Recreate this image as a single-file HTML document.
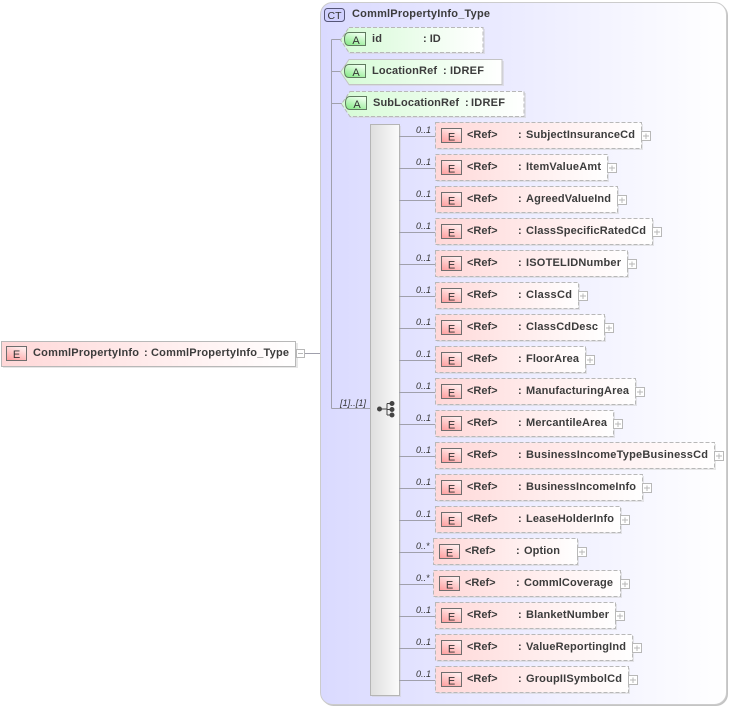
<!DOCTYPE html>
<html><head><meta charset="utf-8"><style>
html,body{margin:0;padding:0;background:#fff;width:731px;height:708px;overflow:hidden}
svg{display:block}
text{font-family:"Liberation Sans",sans-serif;font-size:11px;font-weight:bold;fill:#3c3c3c}
.c{font-size:9px;font-weight:normal;font-style:italic;fill:#333}
.e{font-weight:normal;fill:#333;text-anchor:middle;font-size:11px}
.l{stroke:#a0a0ac;stroke-width:1;fill:none}
.b{fill:url(#rg);stroke:#b8b8b8;stroke-width:1;stroke-dasharray:4 2}
.bs{fill:url(#rg);stroke:#c4c4c4;stroke-width:1}
.s{fill:#cfcfcf;opacity:.5}
.i{fill:url(#eg);stroke:#6e6e6e;stroke-width:1}
.p{fill:#fff;stroke:#b8b8b8;stroke-width:1}
.pl{stroke:#b8b8b8;stroke-width:1;fill:none}
.a{fill:url(#ag);stroke:#b8b8b8;stroke-width:1;stroke-dasharray:4 2}
.as{fill:url(#ag);stroke:#c4c4c4;stroke-width:1}
.ai{fill:url(#aig);stroke:#5f7a5f;stroke-width:1}
</style></head><body>
<svg width="731" height="708" viewBox="0 0 731 708" xmlns="http://www.w3.org/2000/svg">
<defs>
<linearGradient id="rg" x1="0" x2="1" y1="0" y2="0"><stop offset="0" stop-color="#ffd8d8"/><stop offset="1" stop-color="#ffffff"/></linearGradient>
<linearGradient id="ag" x1="0" x2="1" y1="0" y2="0"><stop offset="0" stop-color="#d6fbd6"/><stop offset="1" stop-color="#ffffff"/></linearGradient>
<linearGradient id="eg" x1="0" x2="0.5" y1="1" y2="0"><stop offset="0" stop-color="#ff9c9c"/><stop offset="1" stop-color="#ffeaea"/></linearGradient>
<linearGradient id="aig" x1="0" x2="0.5" y1="1" y2="0"><stop offset="0" stop-color="#7fe87f"/><stop offset="1" stop-color="#eaffea"/></linearGradient>
<linearGradient id="cg" x1="0" x2="1" y1="0" y2="0"><stop offset="0" stop-color="#dadaff"/><stop offset="1" stop-color="#ffffff"/></linearGradient>
<linearGradient id="sg" x1="0" x2="1" y1="0" y2="0"><stop offset="0" stop-color="#dedede"/><stop offset="1" stop-color="#fbfbfb"/></linearGradient>
</defs>

<!-- root element -->
<rect class="s" x="3" y="343" width="295" height="25"/>
<rect x="1.5" y="341.5" width="294" height="25" fill="url(#rg)" stroke="#b8b8b8"/>
<rect class="i" x="6.5" y="346.5" width="20" height="14"/>
<text class="e" x="16.5" y="358">E</text>
<text x="33" y="356" textLength="106" lengthAdjust="spacing">CommlPropertyInfo</text>
<text x="144" y="356">:</text>
<text x="151" y="356" textLength="138" lengthAdjust="spacing">CommlPropertyInfo_Type</text>
<rect class="p" x="296.5" y="349.5" width="8" height="8"/>
<path class="pl" d="M298 353.5H303"/>
<path class="l" d="M305 353.5H331"/>

<!-- complex type container -->
<rect x="321.500" y="3.500" width="406.500" height="702.500" rx="12" fill="#c4c4c4"/>
<rect x="320.500" y="2.500" width="406" height="702" rx="12" fill="url(#cg)" stroke="#cccccc"/>
<rect x="324.500" y="8.500" width="20" height="13" rx="3" fill="#d0d0ff" stroke="#555577"/>
<text class="e" x="334.500" y="19" style="font-size:10.5px">CT</text>
<text x="352" y="17" textLength="138" lengthAdjust="spacing">CommlPropertyInfo_Type</text>

<!-- tree lines -->
<path class="l" d="M331.500 39.500V408.500M331.500 39.500H341M331.500 71.500H341M331.500 103.500H342M331.500 408.500H370"/>
<text class="c" x="340" y="406" textLength="26">[1]..[1]</text>

<!-- attributes -->
<path class="s" d="M349 29H485V54H349L343 41Z"/>
<path class="a" d="M349 27.500H483V52.500H349L340.500 40Z"/>
<path class="ai" d="M349 32.500H365.500V45.500H349Q344.500 45.500 344.500 39Q344.500 32.500 349 32.500Z"/>
<text class="e" x="356" y="44">A</text>
<text x="372" y="42" textLength="10" lengthAdjust="spacing">id</text>
<text x="423" y="42">: ID</text>

<path class="s" d="M349 61H504V86H349L343 73Z"/>
<path class="as" d="M349 59.500H502V84.500H349L340.500 72Z"/>
<path class="ai" d="M349 64.500H365.500V77.500H349Q344.500 77.500 344.500 71Q344.500 64.500 349 64.500Z"/>
<text class="e" x="356" y="76">A</text>
<text x="372" y="74" textLength="65" lengthAdjust="spacing">LocationRef</text>
<text x="443" y="74">:</text>
<text x="450" y="74" textLength="34" lengthAdjust="spacing">IDREF</text>

<path class="s" d="M350 93H526V118H350L344 105Z"/>
<path class="a" d="M350 91.500H524V116.500H350L341.500 104Z"/>
<path class="ai" d="M350 96.500H366.500V109.500H350Q345.500 109.500 345.500 103Q345.500 96.500 350 96.500Z"/>
<text class="e" x="357" y="108">A</text>
<text x="373" y="106" textLength="86" lengthAdjust="spacing">SubLocationRef</text>
<text x="465" y="106">:</text>
<text x="471" y="106" textLength="34" lengthAdjust="spacing">IDREF</text>

<!-- sequence -->
<rect class="s" x="372" y="126" width="29" height="571"/>
<rect x="370.500" y="124.500" width="29" height="571" fill="url(#sg)" stroke="#b5b5b5"/>
<g fill="#444" stroke="#444">
<path fill="none" d="M379 409H387M387 403.500V415M387 403.500H392M387 409.500H392M387 415H392"/>
<circle cx="379.500" cy="409" r="2"/>
<circle cx="392" cy="403.500" r="2"/>
<circle cx="392" cy="409.500" r="2"/>
<circle cx="392" cy="415" r="2"/>
</g>

<!-- rows -->
<g transform="translate(0,122)"><path class="l" d="M399 14.500H435"/><text class="c" x="416" y="11">0..1</text><rect class="s" x="437" y="2" width="206" height="26"/><rect class="b" x="435.500" y="0.500" width="206" height="26"/><rect class="i" x="441.500" y="6.500" width="20" height="14"/><text class="e" x="451.500" y="18.500">E</text><text x="467" y="16">&lt;Ref&gt;</text><text x="518" y="16">:</text><text x="526" y="16" textLength="109" lengthAdjust="spacing">SubjectInsuranceCd</text><rect class="p" x="641.500" y="9.500" width="9" height="9"/><path class="pl" d="M643 14H649M646 11.500V17"/></g>
<g transform="translate(0,154)"><path class="l" d="M399 14.500H435"/><text class="c" x="416" y="11">0..1</text><rect class="s" x="437" y="2" width="172" height="26"/><rect class="b" x="435.500" y="0.500" width="172" height="26"/><rect class="i" x="441.500" y="6.500" width="20" height="14"/><text class="e" x="451.500" y="18.500">E</text><text x="467" y="16">&lt;Ref&gt;</text><text x="518" y="16">:</text><text x="526" y="16" textLength="75" lengthAdjust="spacing">ItemValueAmt</text><rect class="p" x="607.500" y="9.500" width="9" height="9"/><path class="pl" d="M609 14H615M612 11.500V17"/></g>
<g transform="translate(0,186)"><path class="l" d="M399 14.500H435"/><text class="c" x="416" y="11">0..1</text><rect class="s" x="437" y="2" width="182" height="26"/><rect class="b" x="435.500" y="0.500" width="182" height="26"/><rect class="i" x="441.500" y="6.500" width="20" height="14"/><text class="e" x="451.500" y="18.500">E</text><text x="467" y="16">&lt;Ref&gt;</text><text x="518" y="16">:</text><text x="526" y="16" textLength="85" lengthAdjust="spacing">AgreedValueInd</text><rect class="p" x="617.500" y="9.500" width="9" height="9"/><path class="pl" d="M619 14H625M622 11.500V17"/></g>
<g transform="translate(0,218)"><path class="l" d="M399 14.500H435"/><text class="c" x="416" y="11">0..1</text><rect class="s" x="437" y="2" width="217" height="26"/><rect class="b" x="435.500" y="0.500" width="217" height="26"/><rect class="i" x="441.500" y="6.500" width="20" height="14"/><text class="e" x="451.500" y="18.500">E</text><text x="467" y="16">&lt;Ref&gt;</text><text x="518" y="16">:</text><text x="526" y="16" textLength="120" lengthAdjust="spacing">ClassSpecificRatedCd</text><rect class="p" x="652.500" y="9.500" width="9" height="9"/><path class="pl" d="M654 14H660M657 11.500V17"/></g>
<g transform="translate(0,250)"><path class="l" d="M399 14.500H435"/><text class="c" x="416" y="11">0..1</text><rect class="s" x="437" y="2" width="192" height="26"/><rect class="b" x="435.500" y="0.500" width="192" height="26"/><rect class="i" x="441.500" y="6.500" width="20" height="14"/><text class="e" x="451.500" y="18.500">E</text><text x="467" y="16">&lt;Ref&gt;</text><text x="518" y="16">:</text><text x="526" y="16" textLength="95" lengthAdjust="spacing">ISOTELIDNumber</text><rect class="p" x="627.500" y="9.500" width="9" height="9"/><path class="pl" d="M629 14H635M632 11.500V17"/></g>
<g transform="translate(0,282)"><path class="l" d="M399 14.500H435"/><text class="c" x="416" y="11">0..1</text><rect class="s" x="437" y="2" width="143" height="26"/><rect class="b" x="435.500" y="0.500" width="143" height="26"/><rect class="i" x="441.500" y="6.500" width="20" height="14"/><text class="e" x="451.500" y="18.500">E</text><text x="467" y="16">&lt;Ref&gt;</text><text x="518" y="16">:</text><text x="526" y="16" textLength="46" lengthAdjust="spacing">ClassCd</text><rect class="p" x="578.500" y="9.500" width="9" height="9"/><path class="pl" d="M580 14H586M583 11.500V17"/></g>
<g transform="translate(0,314)"><path class="l" d="M399 14.500H435"/><text class="c" x="416" y="11">0..1</text><rect class="s" x="437" y="2" width="169" height="26"/><rect class="b" x="435.500" y="0.500" width="169" height="26"/><rect class="i" x="441.500" y="6.500" width="20" height="14"/><text class="e" x="451.500" y="18.500">E</text><text x="467" y="16">&lt;Ref&gt;</text><text x="518" y="16">:</text><text x="526" y="16" textLength="72" lengthAdjust="spacing">ClassCdDesc</text><rect class="p" x="604.500" y="9.500" width="9" height="9"/><path class="pl" d="M606 14H612M609 11.500V17"/></g>
<g transform="translate(0,346)"><path class="l" d="M399 14.500H435"/><text class="c" x="416" y="11">0..1</text><rect class="s" x="437" y="2" width="150" height="26"/><rect class="b" x="435.500" y="0.500" width="150" height="26"/><rect class="i" x="441.500" y="6.500" width="20" height="14"/><text class="e" x="451.500" y="18.500">E</text><text x="467" y="16">&lt;Ref&gt;</text><text x="518" y="16">:</text><text x="526" y="16" textLength="53" lengthAdjust="spacing">FloorArea</text><rect class="p" x="585.500" y="9.500" width="9" height="9"/><path class="pl" d="M587 14H593M590 11.500V17"/></g>
<g transform="translate(0,378)"><path class="l" d="M399 14.500H435"/><text class="c" x="416" y="11">0..1</text><rect class="s" x="437" y="2" width="200" height="26"/><rect class="b" x="435.500" y="0.500" width="200" height="26"/><rect class="i" x="441.500" y="6.500" width="20" height="14"/><text class="e" x="451.500" y="18.500">E</text><text x="467" y="16">&lt;Ref&gt;</text><text x="518" y="16">:</text><text x="526" y="16" textLength="103" lengthAdjust="spacing">ManufacturingArea</text><rect class="p" x="635.500" y="9.500" width="9" height="9"/><path class="pl" d="M637 14H643M640 11.500V17"/></g>
<g transform="translate(0,410)"><path class="l" d="M399 14.500H435"/><text class="c" x="416" y="11">0..1</text><rect class="s" x="437" y="2" width="178" height="26"/><rect class="b" x="435.500" y="0.500" width="178" height="26"/><rect class="i" x="441.500" y="6.500" width="20" height="14"/><text class="e" x="451.500" y="18.500">E</text><text x="467" y="16">&lt;Ref&gt;</text><text x="518" y="16">:</text><text x="526" y="16" textLength="81" lengthAdjust="spacing">MercantileArea</text><rect class="p" x="613.500" y="9.500" width="9" height="9"/><path class="pl" d="M615 14H621M618 11.500V17"/></g>
<g transform="translate(0,442)"><path class="l" d="M399 14.500H435"/><text class="c" x="416" y="11">0..1</text><rect class="s" x="437" y="2" width="279" height="26"/><rect class="b" x="435.500" y="0.500" width="279" height="26"/><rect class="i" x="441.500" y="6.500" width="20" height="14"/><text class="e" x="451.500" y="18.500">E</text><text x="467" y="16">&lt;Ref&gt;</text><text x="518" y="16">:</text><text x="526" y="16" textLength="182" lengthAdjust="spacing">BusinessIncomeTypeBusinessCd</text><rect class="p" x="714.500" y="9.500" width="9" height="9"/><path class="pl" d="M716 14H722M719 11.500V17"/></g>
<g transform="translate(0,474)"><path class="l" d="M399 14.500H435"/><text class="c" x="416" y="11">0..1</text><rect class="s" x="437" y="2" width="207" height="26"/><rect class="b" x="435.500" y="0.500" width="207" height="26"/><rect class="i" x="441.500" y="6.500" width="20" height="14"/><text class="e" x="451.500" y="18.500">E</text><text x="467" y="16">&lt;Ref&gt;</text><text x="518" y="16">:</text><text x="526" y="16" textLength="110" lengthAdjust="spacing">BusinessIncomeInfo</text><rect class="p" x="642.500" y="9.500" width="9" height="9"/><path class="pl" d="M644 14H650M647 11.500V17"/></g>
<g transform="translate(0,506)"><path class="l" d="M399 14.500H435"/><text class="c" x="416" y="11">0..1</text><rect class="s" x="437" y="2" width="185" height="26"/><rect class="b" x="435.500" y="0.500" width="185" height="26"/><rect class="i" x="441.500" y="6.500" width="20" height="14"/><text class="e" x="451.500" y="18.500">E</text><text x="467" y="16">&lt;Ref&gt;</text><text x="518" y="16">:</text><text x="526" y="16" textLength="88" lengthAdjust="spacing">LeaseHolderInfo</text><rect class="p" x="620.500" y="9.500" width="9" height="9"/><path class="pl" d="M622 14H628M625 11.500V17"/></g>
<g transform="translate(0,538)"><path class="l" d="M399 14.500H433"/><text class="c" x="416" y="11">0..*</text><rect class="s" x="435" y="2" width="144" height="26"/><rect class="b" x="433.500" y="0.500" width="144" height="26"/><rect class="i" x="439.500" y="6.500" width="20" height="14"/><text class="e" x="449.500" y="18.500">E</text><text x="465" y="16">&lt;Ref&gt;</text><text x="516" y="16">:</text><text x="524" y="16" textLength="36" lengthAdjust="spacing">Option</text><rect class="p" x="577.500" y="9.500" width="9" height="9"/><path class="pl" d="M579 14H585M582 11.500V17"/></g>
<g transform="translate(0,570)"><path class="l" d="M399 14.500H433"/><text class="c" x="416" y="11">0..*</text><rect class="s" x="435" y="2" width="187" height="26"/><rect class="b" x="433.500" y="0.500" width="187" height="26"/><rect class="i" x="439.500" y="6.500" width="20" height="14"/><text class="e" x="449.500" y="18.500">E</text><text x="465" y="16">&lt;Ref&gt;</text><text x="516" y="16">:</text><text x="524" y="16" textLength="89" lengthAdjust="spacing">CommlCoverage</text><rect class="p" x="620.500" y="9.500" width="9" height="9"/><path class="pl" d="M622 14H628M625 11.500V17"/></g>
<g transform="translate(0,602)"><path class="l" d="M399 14.500H435"/><text class="c" x="416" y="11">0..1</text><rect class="s" x="437" y="2" width="180" height="26"/><rect class="b" x="435.500" y="0.500" width="180" height="26"/><rect class="i" x="441.500" y="6.500" width="20" height="14"/><text class="e" x="451.500" y="18.500">E</text><text x="467" y="16">&lt;Ref&gt;</text><text x="518" y="16">:</text><text x="526" y="16" textLength="83" lengthAdjust="spacing">BlanketNumber</text><rect class="p" x="615.500" y="9.500" width="9" height="9"/><path class="pl" d="M617 14H623M620 11.500V17"/></g>
<g transform="translate(0,634)"><path class="l" d="M399 14.500H435"/><text class="c" x="416" y="11">0..1</text><rect class="s" x="437" y="2" width="197" height="26"/><rect class="b" x="435.500" y="0.500" width="197" height="26"/><rect class="i" x="441.500" y="6.500" width="20" height="14"/><text class="e" x="451.500" y="18.500">E</text><text x="467" y="16">&lt;Ref&gt;</text><text x="518" y="16">:</text><text x="526" y="16" textLength="100" lengthAdjust="spacing">ValueReportingInd</text><rect class="p" x="632.500" y="9.500" width="9" height="9"/><path class="pl" d="M634 14H640M637 11.500V17"/></g>
<g transform="translate(0,666)"><path class="l" d="M399 14.500H435"/><text class="c" x="416" y="11">0..1</text><rect class="s" x="437" y="2" width="193" height="26"/><rect class="b" x="435.500" y="0.500" width="193" height="26"/><rect class="i" x="441.500" y="6.500" width="20" height="14"/><text class="e" x="451.500" y="18.500">E</text><text x="467" y="16">&lt;Ref&gt;</text><text x="518" y="16">:</text><text x="526" y="16" textLength="96" lengthAdjust="spacing">GroupIISymbolCd</text><rect class="p" x="628.500" y="9.500" width="9" height="9"/><path class="pl" d="M630 14H636M633 11.500V17"/></g>
</svg>
</body></html>
